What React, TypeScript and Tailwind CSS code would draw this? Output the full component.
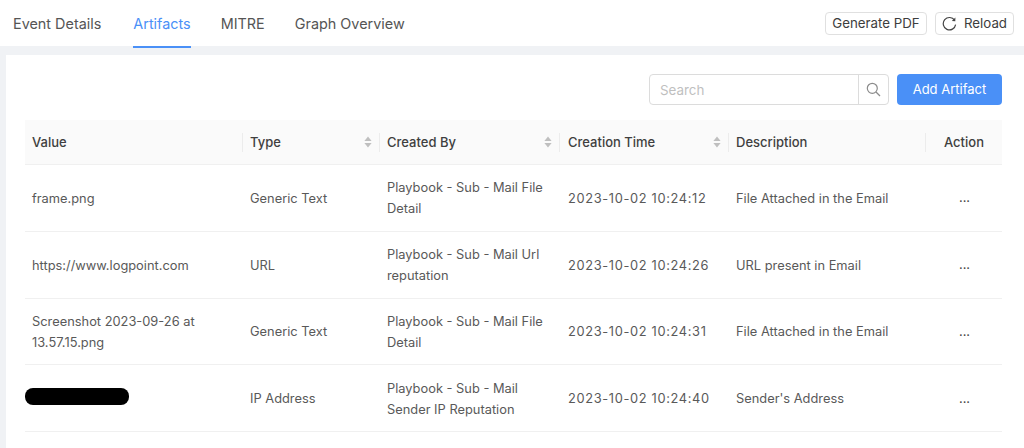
import React from 'react'

const cols = 'grid grid-cols-[218px_137px_180px_169px_197px_76px]'

const rows = [
  { value: 'frame.png', type: 'Generic Text', by: ['Playbook - Sub - Mail File', 'Detail'], time: '2023-10-02 10:24:12', desc: 'File Attached in the Email' },
  { value: 'https://www.logpoint.com', type: 'URL', by: ['Playbook - Sub - Mail Url', 'reputation'], time: '2023-10-02 10:24:26', desc: 'URL present in Email' },
  { value: 'Screenshot 2023-09-26 at 13.57.15.png', type: 'Generic Text', by: ['Playbook - Sub - Mail File', 'Detail'], time: '2023-10-02 10:24:31', desc: 'File Attached in the Email' },
  { value: '', type: 'IP Address', by: ['Playbook - Sub - Mail', 'Sender IP Reputation'], time: '2023-10-02 10:24:40', desc: "Sender's Address" },
]

function SortIcon() {
  return (
    <svg width="8" height="12" viewBox="0 0 8 12" className="shrink-0 fill-[#bfbfbf]">
      <path d="M4 0.5 L7.6 5 H0.4 Z" />
      <path d="M4 11.5 L7.6 7 H0.4 Z" />
    </svg>
  )
}

function ReloadIcon() {
  return (
    <svg width="15" height="15" viewBox="0 0 15 15" fill="none" className="shrink-0">
      <path d="M12.6 4.2 A6.2 6.2 0 1 0 13.6 8.6" stroke="#444" strokeWidth="1.2" />
      <path d="M13.4 1.6 L13.3 5.2 L9.8 4.9 Z" fill="#444" />
    </svg>
  )
}

function SearchIcon() {
  return (
    <svg width="15" height="15" viewBox="0 0 15 15" fill="none" stroke="#8c8c8c" strokeWidth="1.2">
      <circle cx="6.3" cy="6.3" r="5" />
      <path d="M10 10 L14 14" />
    </svg>
  )
}

function HeadCell({ label, sort, pad = 'pl-[7px]' }: { label: string; sort?: boolean; pad?: string }) {
  return (
    <div className={`relative flex items-center justify-between pr-[8px] ${pad}`}>
      <span className="pt-[2px]">{label}</span>
      {sort && <SortIcon />}
      {/* column divider */}
      <span className="absolute right-0 top-[13px] h-[19px] w-px bg-[#ececec]" />
    </div>
  )
}

export default function App() {
  return (
    <div className="w-[1024px] h-[448px] overflow-hidden bg-[#f0f2f5] font-['Inter',sans-serif] text-[12.85px] text-[#595959]">
      <div className="h-[46px] bg-white flex items-start justify-between pl-[13px] pr-[10px]">
        <div className="flex gap-[30px] text-[14.4px] text-[#555]">
          <div className="h-[46px] leading-[47px] mr-[2px]">Event Details</div>
          <div className="h-[48px] leading-[47px] text-[#4a90f7] border-b-2 border-[#4a90f7] relative z-10">Artifacts</div>
          <div className="h-[46px] leading-[47px]">MITRE</div>
          <div className="h-[46px] leading-[47px]">Graph Overview</div>
        </div>
        <div className="flex gap-2 mt-3 text-[#3d3d3d] text-[13.3px]">
          <button className="h-[23px] w-[102px] border border-[#e0e0e0] rounded-sm flex items-center justify-center">Generate PDF</button>
          <button className="h-[23px] w-[79px] border border-[#e0e0e0] rounded-sm flex items-center justify-center gap-[7px]">
            <ReloadIcon />
            Reload
          </button>
        </div>
      </div>

      <div className="mt-[9px] ml-[6px] h-[393px] bg-white pt-[19px] pl-[19px] pr-[22px]">
        <div className="flex justify-end gap-[8px] h-[31px]">
          <div className="flex w-[240px] border border-[#dcdcdc] rounded-sm">
            <div className="flex-1 pl-[10px] text-[13.4px] text-[#bfbfbf] leading-[31px]">Search</div>
            <div className="w-[30px] border-l border-[#dcdcdc] flex items-center justify-center">
              <SearchIcon />
            </div>
          </div>
          <button className="w-[105px] pt-px text-[13px] bg-[#4a90f7] text-white rounded-sm">Add Artifact</button>
        </div>

        <div className={`${cols} mt-[15px] h-[45px] bg-[#fafafa] border-b border-[#f0f0f0] text-[13px] text-[#3f3f3f] font-medium`}>
          <HeadCell label="Value" />
          <HeadCell label="Type" sort />
          <HeadCell label="Created By" sort />
          <HeadCell label="Creation Time" sort pad="pl-2" />
          <HeadCell label="Description" />
          <div className="flex items-center justify-center pt-[2px]">Action</div>
        </div>

        {rows.map((r) => (
          <div key={r.time} className={`${cols} h-[66.75px] pt-px border-b border-[#f0f0f0] items-center leading-[21px]`}>
            <div className="pl-[7px] pr-6">
              {r.value || <div className="-ml-[7px] mb-[4px] h-[17px] w-[104px] rounded-[8px] bg-black" />}
            </div>
            <div className="pl-[7px]">{r.type}</div>
            <div className="pl-[7px]">
              {r.by.map((l) => (
                <div key={l}>{l}</div>
              ))}
            </div>
            <div className="pl-2 tracking-[0.65px]">{r.time}</div>
            <div className="pl-[7px]">{r.desc}</div>
            <div className="text-center leading-[14px] text-[#444] pl-[1px]">...</div>
          </div>
        ))}
      </div>
    </div>
  )
}
